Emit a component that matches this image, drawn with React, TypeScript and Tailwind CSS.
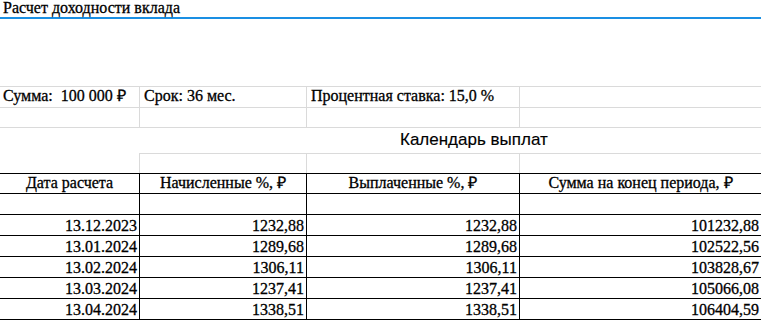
import type React from "react"

const cols = "grid grid-cols-[140px_167px_213px_241px]"

const rows = [
  ["13.12.2023", "1232,88", "1232,88", "101232,88"],
  ["13.01.2024", "1289,68", "1289,68", "102522,56"],
  ["13.02.2024", "1306,11", "1306,11", "103828,67"],
  ["13.03.2024", "1237,41", "1237,41", "105066,08"],
  ["13.04.2024", "1338,51", "1338,51", "106404,59"],
]

const headers = ["Дата расчета", "Начисленные %, ₽", "Выплаченные %, ₽", "Сумма на конец периода, ₽"]

const App: React.FC = () => {
  return (
    <div className="w-[761px] h-[322px] overflow-hidden bg-white text-black font-['Liberation_Serif',serif] text-[16px] leading-[16px] [-webkit-text-stroke:0.3px_black]">
      {/* title */}
      <div className="h-[19px] border-b-2 border-[#1a8fe3] px-[3px] flex items-end pb-[1px]">
        Расчет доходности вклада
      </div>
      <div className="h-[67px]" />

      {/* parameters */}
      <div className={`${cols} h-[21px] border-t border-[#dadada]`}>
        <div className="border-r border-[#dadada] px-[3px] flex items-end pb-[3px] whitespace-pre">Сумма:  100 000 ₽</div>
        <div className="border-r border-[#dadada] px-[4px] flex items-end pb-[3px]">Срок: 36 мес.</div>
        <div className="border-r border-[#dadada] px-[4px] flex items-end pb-[3px]">Процентная ставка: 15,0 %</div>
        <div />
      </div>
      <div className={`${cols} h-[20px] border-t border-[#dadada]`}>
        <div className="border-r border-[#dadada]" />
        <div className="border-r border-[#dadada]" />
        <div className="border-r border-[#dadada]" />
        <div />
      </div>

      {/* calendar title */}
      <div className="h-[26px] border-t border-[#dadada] flex items-end pb-[5px] pl-[400px] font-['Liberation_Sans',sans-serif] text-[17px] leading-[17px] [-webkit-text-stroke:0.15px_black]">
        Календарь выплат
      </div>
      <div className={`${cols} h-[20px]`}>
        <div className="border-r border-[#dadada]" />
        <div className="border-r border-t border-[#dadada]" />
        <div className="border-r border-t border-[#dadada]" />
        <div className="border-t border-[#dadada]" />
      </div>

      {/* table header */}
      <div className={`${cols} h-[21px] border-y border-black`}>
        {headers.map((h, i) => (
          <div key={h} className={`flex items-end justify-center pb-[2px] ${i < 3 ? "border-r border-black" : ""}`}>
            {h}
          </div>
        ))}
      </div>
      <div className={`${cols} h-[21px] border-b border-black`}>
        <div className="border-r border-black" />
        <div className="border-r border-black" />
        <div className="border-r border-black" />
        <div />
      </div>

      {rows.map((r) => (
        <div key={r[0]} className={`${cols} h-[21px] border-b border-black`}>
          {r.map((v, i) => (
            <div key={i} className={`flex items-end justify-end pb-[1px] pr-[2px] ${i < 3 ? "border-r border-black" : ""}`}>
              {v}
            </div>
          ))}
        </div>
      ))}
    </div>
  )
}

export default App
